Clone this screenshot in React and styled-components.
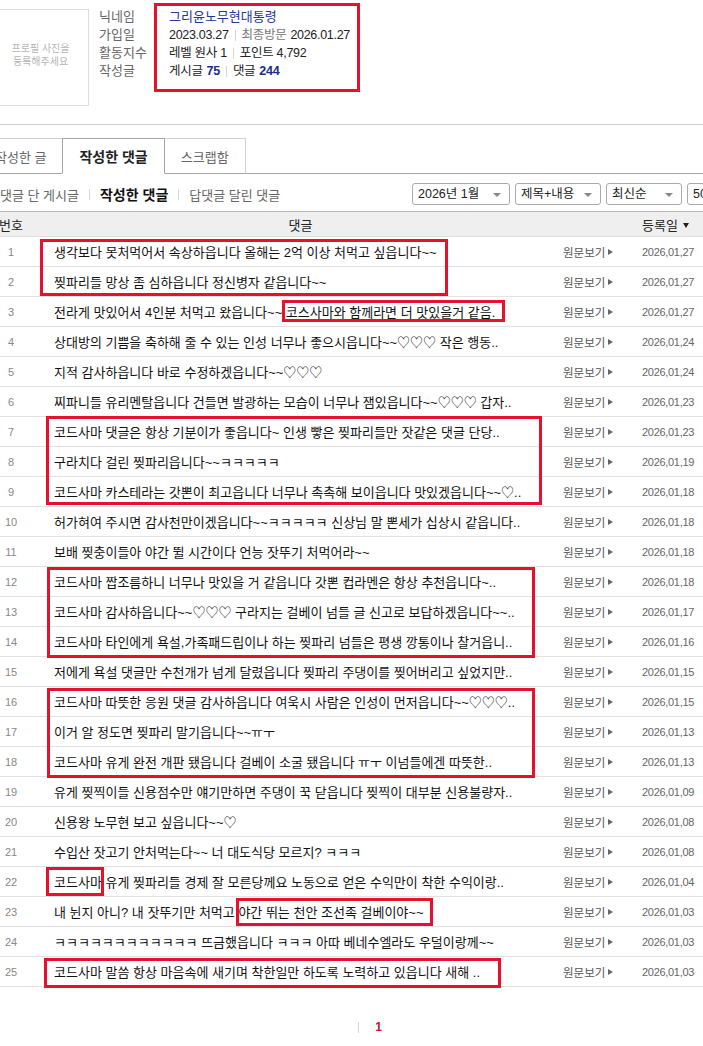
import React from 'react';
import styled, { createGlobalStyle } from 'styled-components';

const font = `"Liberation Sans", "Noto Sans CJK KR", sans-serif`;
const red = '#e8112d';

const GlobalStyle = createGlobalStyle`
    html, body {
        margin: 0;
        padding: 0;
        background: #fff;
        overflow: hidden;
    }
    body {
        font-family: ${font};
        font-size: 13px;
        color: #222;
    }
`;

const Page = styled.div`
    width: 730px;
    margin-left: -8px;
`;

/* profile */

const ProfileSection = styled.section`
    position: relative;
    display: flex;
    height: 106px;
    padding-top: 8px;
    box-sizing: border-box;
`;

const PhotoBox = styled.div`
    width: 97px;
    height: 97px;
    margin-top: 1px;
    box-sizing: border-box;
    border: 1px solid #ddd;
    display: flex;
    align-items: center;
    justify-content: center;
    text-align: center;
    font-size: 10px;
    line-height: 13px;
    color: #b5b5b5;
    padding-bottom: 6px;
`;

const InfoList = styled.dl`
    margin: 0 0 0 10px;
    display: grid;
    grid-template-columns: 70px auto;
    grid-auto-rows: 18px;
    line-height: 18px;
    font-size: 13px;
    align-content: start;
`;

const Label = styled.dt`
    color: #666;
`;

const Value = styled.dd`
    margin: 0;
    color: #222;
    display: flex;
    align-items: center;
    font-size: 12.5px;
    letter-spacing: -0.3px;
`;

const Nick = styled.a`
    color: #22379a;
    font-size: 13px;
    letter-spacing: 0;
    text-decoration: none;
`;

const Dim = styled.span`
    color: #777;
    margin-right: 4px;
`;

const Count = styled.b`
    color: #1c2a8a;
    margin-left: 4px;
`;

const Bar = styled.span`
    display: inline-block;
    width: 1px;
    height: 11px;
    background: #d5d5d5;
    margin: 0 ${(p) => p.$gap || 6}px;
`;

const Mark = styled.div`
    position: absolute;
    left: ${(p) => p.$x}px;
    top: ${(p) => p.$y}px;
    width: ${(p) => p.$w}px;
    height: ${(p) => p.$h}px;
    box-sizing: border-box;
    border: 3px solid ${red};
    pointer-events: none;
    z-index: 2;
`;

const Divider = styled.hr`
    margin: 18px 0 0;
    border: 0;
    height: 1px;
    background: #ccc;
`;

/* tabs */

const TabBar = styled.nav`
    display: flex;
    align-items: flex-end;
    margin: 13px 0 0 -13px;
    border-bottom: 1px solid #a5a5a5;
    height: 35px;
`;

const Tab = styled.a`
    position: relative;
    height: 36px;
    margin-bottom: -1px;
    margin-left: -1px;
    box-sizing: border-box;
    padding: 0 16px;
    display: flex;
    align-items: center;
    background: #fff;
    text-decoration: none;
    border: 1px solid ${(p) => (p.$active ? '#a5a5a5' : '#d0d0d0')};
    border-bottom: 1px solid ${(p) => (p.$active ? '#fff' : '#a5a5a5')};
    z-index: ${(p) => (p.$active ? 1 : 0)};
    color: ${(p) => (p.$active ? '#222' : '#666')};
    font-size: ${(p) => (p.$active ? 14 : 13)}px;
    font-weight: ${(p) => (p.$active ? 700 : 400)};
`;

/* filters */

const SubBar = styled.div`
    display: flex;
    align-items: center;
    padding-top: 9px;
    margin-bottom: 6px;
    height: 22px;
`;

const SubNav = styled.div`
    display: flex;
    align-items: center;
    padding-left: 8px;
`;

const SubItem = styled.a`
    color: ${(p) => (p.$active ? '#111' : '#666')};
    font-weight: ${(p) => (p.$active ? 700 : 400)};
    font-size: ${(p) => (p.$active ? 14 : 13)}px;
    text-decoration: none;
`;

const Selects = styled.div`
    margin-left: auto;
    display: flex;
    gap: 5px;
`;

const Select = styled.div`
    position: relative;
    width: ${(p) => p.$w}px;
    height: 22px;
    box-sizing: border-box;
    border: 1px solid #aaa;
    border-radius: 3px;
    background: #fff;
    padding-left: 5px;
    font-size: 12.5px;
    line-height: 20px;
    color: #222;
    overflow: hidden;
    white-space: nowrap;

    &::after {
        content: '';
        position: absolute;
        right: 8px;
        top: 9px;
        border-left: 4px solid transparent;
        border-right: 4px solid transparent;
        border-top: 4px solid #888;
    }
`;

/* table */

const cols = '38px 525px 87px 80px';

const HeadRow = styled.div`
    display: grid;
    grid-template-columns: ${cols};
    height: 26px;
    box-sizing: border-box;
    border-top: 1px solid #bbb;
    border-bottom: 1px solid #ddd;
    background: #efefef;
    align-items: center;
    font-size: 13px;
    color: #222;
`;

const HeadCell = styled.div`
    text-align: ${(p) => p.$align || 'left'};
    padding-left: ${(p) => p.$pad || 0}px;
`;

const SortCaret = styled.span`
    display: inline-block;
    margin-left: 5px;
    vertical-align: 2px;
    border-left: 3.5px solid transparent;
    border-right: 3.5px solid transparent;
    border-top: 5px solid #222;
`;

const Body = styled.div`
    position: relative;
`;

const Row = styled.div`
    display: grid;
    grid-template-columns: ${cols};
    height: 30px;
    box-sizing: border-box;
    border-bottom: 1px solid #e2e2e2;
    align-items: center;
`;

const Num = styled.div`
    text-align: center;
    font-size: 11px;
    color: #888;
`;

const Comment = styled.div`
    padding-left: 24px;
    font-size: 13px;
    color: #111;
    white-space: nowrap;
    overflow: hidden;
`;

const ViewLink = styled.a`
    padding-left: 8px;
    font-size: 11.5px;
    color: #555;
    text-decoration: none;
    display: flex;
    align-items: center;

    &::after {
        content: '';
        margin-left: 3px;
        border-top: 3px solid transparent;
        border-bottom: 3px solid transparent;
        border-left: 5px solid #666;
    }
`;

const DateCell = styled.div`
    font-size: 11px;
    color: #666;
    letter-spacing: -0.3px;
`;

const Pager = styled.div`
    display: flex;
    justify-content: center;
    align-items: center;
    padding: 32px 0 0 20px;
    line-height: 16px;
`;

const PageNum = styled.b`
    color: #c8102e;
    font-size: 12px;
    margin-left: 10px;
`;

const rows = [
    ['생각보다 못처먹어서 속상하읍니다 올해는 2억 이상 처먹고 싶읍니다~~', '27'],
    ['찢파리들 망상 좀 심하읍니다 정신병자 같읍니다~~', '27'],
    ['전라게 맛있어서 4인분 처먹고 왔읍니다~~ 코스사마와 함께라면 더 맛있을거 같음.', '27'],
    ['상대방의 기쁨을 축하해 줄 수 있는 인성 너무나 좋으시읍니다~~♡♡♡ 작은 행동..', '24'],
    ['지적 감사하읍니다 바로 수정하겠읍니다~~♡♡♡', '24'],
    ['찌파니들 유리멘탈읍니다 건들면 발광하는 모습이 너무나 잼있읍니다~~♡♡♡ 갑자..', '23'],
    ['코드사마 댓글은 항상 기분이가 좋읍니다~ 인생 빻은 찢파리들만 잣같은 댓글 단당..', '23'],
    ['구라치다 걸린 찢파리읍니다~~ㅋㅋㅋㅋㅋ', '19'],
    ['코드사마 카스테라는 갓뽄이 최고읍니다 너무나 촉촉해 보이읍니다 맛있겠읍니다~~♡..', '18'],
    ['허가혀여 주시면 감사천만이겠읍니다~~ㅋㅋㅋㅋㅋ 신상님 말 뽄세가 십상시 같읍니다..', '18'],
    ['보배 찢충이들아 야간 뛸 시간이다 언능 잣뚜기 처먹어라~~', '18'],
    ['코드사마 짭조름하니 너무나 맛있을 거 같읍니다 갓뽄 컵라멘은 항상 추천읍니다~..', '18'],
    ['코드사마 감사하읍니다~~♡♡♡ 구라지는 걸베이 넘들 글 신고로 보답하겠읍니다~~..', '17'],
    ['코드사마 타인에게 욕설,가족패드립이나 하는 찢파리 넘들은 평생 깡통이나 찰거읍니..', '16'],
    ['저에게 욕설 댓글만 수천개가 넘게 달렸읍니다 찢파리 주댕이를 찢어버리고 싶었지만..', '15'],
    ['코드사마 따뜻한 응원 댓글 감사하읍니다 여욱시 사람은 인성이 먼저읍니다~~♡♡♡..', '15'],
    ['이거 알 정도면 찢파리 말기읍니다~~ㅠㅜ', '13'],
    ['코드사마 유게 완전 개판 됐읍니다 걸베이 소굴 됐읍니다 ㅠㅜ 이넘들에겐 따뜻한..', '13'],
    ['유게 찢찍이들 신용점수만 얘기만하면 주댕이 꾹 닫읍니다 찢찍이 대부분 신용불량자..', '09'],
    ['신용왕 노무현 보고 싶읍니다~~♡', '08'],
    ['수입산 잣고기 안처먹는다~~ 너 대도식당 모르지? ㅋㅋㅋ', '08'],
    ['코드사마 유게 찢파리들 경제 잘 모른당께요 노동으로 얻은 수익만이 착한 수익이랑..', '04'],
    ['내 뉜지 아니? 내 잣뚜기만 처먹고 야간 뛰는 천안 조선족 걸베이야~~', '03'],
    ['ㅋㅋㅋㅋㅋㅋㅋㅋㅋㅋㅋㅋ 뜨금했읍니다 ㅋㅋㅋ 아따 베네수엘라도 우덜이랑께~~', '03'],
    ['코드사마 말씀 항상 마음속에 새기며 착한일만 하도록 노력하고 있읍니다 새해 ..', '03'],
];

const marks = [
    { x: 48, y: 2, w: 408, h: 57 },
    { x: 290, y: 63, w: 223, h: 22 },
    { x: 54, y: 179, w: 496, h: 89 },
    { x: 55, y: 330, w: 488, h: 91 },
    { x: 55, y: 451, w: 488, h: 90 },
    { x: 54, y: 630, w: 58, h: 29 },
    { x: 244, y: 661, w: 197, h: 28 },
    { x: 52, y: 721, w: 457, h: 30 },
];

const App = () => (
    <Page>
        <GlobalStyle />

        <ProfileSection>
            <PhotoBox>
                프로필 사진을
                <br />
                등록해주세요
            </PhotoBox>
            <InfoList>
                <Label>닉네임</Label>
                <Value><Nick href="#nick">그리윤노무현대통령</Nick></Value>
                <Label>가입일</Label>
                <Value>
                    2023.03.27
                    <Bar />
                    <Dim>최종방문</Dim>
                    2026.01.27
                </Value>
                <Label>활동지수</Label>
                <Value>
                    레벨 원사 1
                    <Bar />
                    포인트 4,792
                </Value>
                <Label>작성글</Label>
                <Value>
                    게시글
                    <Count>75</Count>
                    <Bar />
                    댓글
                    <Count>244</Count>
                </Value>
            </InfoList>
            <Mark $x={162} $y={3} $w={206} $h={89} />
        </ProfileSection>

        <Divider />

        <TabBar>
            <Tab href="#posts">작성한 글</Tab>
            <Tab $active href="#comments">작성한 댓글</Tab>
            <Tab href="#scrap">스크랩함</Tab>
        </TabBar>

        <SubBar>
            <SubNav>
                <SubItem href="#commented">댓글 단 게시글</SubItem>
                <Bar $gap={10} />
                <SubItem $active href="#mine">작성한 댓글</SubItem>
                <Bar $gap={10} />
                <SubItem href="#replied">답댓글 달린 댓글</SubItem>
            </SubNav>
            <Selects>
                <Select $w={98}>2026년 1월</Select>
                <Select $w={86}>제목+내용</Select>
                <Select $w={76}>최신순</Select>
                <Select $w={35}>50개씩</Select>
            </Selects>
        </SubBar>

        <HeadRow>
            <HeadCell $align="center">번호</HeadCell>
            <HeadCell $align="center" $pad={16}>댓글</HeadCell>
            <HeadCell />
            <HeadCell>
                등록일
                <SortCaret />
            </HeadCell>
        </HeadRow>

        <Body>
            {rows.map(([text, day], i) => (
                <Row key={text}>
                    <Num>{i + 1}</Num>
                    <Comment>{text}</Comment>
                    <ViewLink href="#view">원문보기</ViewLink>
                    <DateCell>{`2026,01,${day}`}</DateCell>
                </Row>
            ))}
            {marks.map((m) => (
                <Mark key={`${m.x}-${m.y}`} $x={m.x} $y={m.y} $w={m.w} $h={m.h} />
            ))}
        </Body>

        <Pager>
            <Bar $gap={0} />
            <PageNum>1</PageNum>
        </Pager>
    </Page>
);

export default App;
